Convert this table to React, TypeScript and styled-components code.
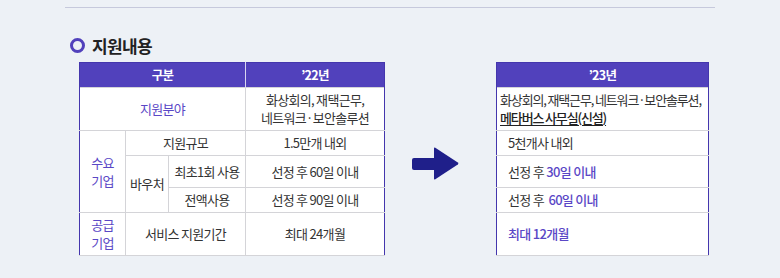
import React from 'react';
import styled, { createGlobalStyle } from 'styled-components';

const GlobalStyle = createGlobalStyle`
  html, body {
    margin: 0;
    padding: 0;
    background: #edf1f6;
  }
  body {
    font-family: "Noto Sans CJK KR", "Noto Sans", sans-serif;
    color: #333;
  }
`;

const Page = styled.div`
  width: 780px;
  height: 278px;
  box-sizing: border-box;
  padding-top: 7px;
`;

const Rule = styled.div`
  margin-left: 65px;
  width: 650px;
  height: 1px;
  background: #c6c9dc;
`;

const Title = styled.h2`
  display: flex;
  align-items: center;
  gap: 7px;
  margin: 26px 0 0 70px;
  height: 22px;
  font-size: 17px;
  font-weight: 700;
  letter-spacing: -0.6px;
  color: #222;
`;

const Ring = styled.span`
  width: 9px;
  height: 9px;
  border: 3px solid #5141bc;
  border-radius: 50%;
  flex: none;
`;

const Row = styled.div`
  display: flex;
  align-items: flex-start;
  margin-top: 6px;
  padding-left: 79px;
`;

const Table = styled.table<{ $width: number }>`
  width: ${p => p.$width}px;
  border-collapse: collapse;
  table-layout: fixed;
  background: #fff;
  border: 1px solid #4436ad;
  font-size: 13px;
  letter-spacing: -0.7px;
  line-height: 18px;
`;

const Head = styled.th`
  height: 24px;
  padding: 0;
  background: #5141bc;
  color: #fff;
  font-weight: 700;
  font-size: 12.5px;
  border-left: 1px solid #d9d6f0;
  &:first-child {
    border-left: none;
  }
`;

const Cell = styled.td<{ $h?: number; $tone?: 'cat' | 'plain'; $left?: number; $tight?: boolean }>`
  height: ${p => (p.$h ? p.$h - 1 : 24)}px;
  padding: 0 0 0 ${p => (p.$left !== undefined ? p.$left : 0)}px;
  text-align: ${p => (p.$left !== undefined ? 'left' : 'center')};
  vertical-align: middle;
  white-space: nowrap;
  letter-spacing: ${p => (p.$tight ? '-1.15px' : 'inherit')};
  color: ${p => (p.$tone === 'cat' ? '#5a47c6' : '#333')};
  border: 1px solid #d4d4d8;
  &:first-child {
    border-left: 1px solid #4436ad;
  }
  &:last-child {
    border-right: 1px solid #4436ad;
  }
`;

const Accent = styled.span`
  color: #5a47c6;
  font-weight: 500;
`;

const New = styled.span`
  color: #222;
  font-weight: 500;
  text-decoration: underline;
  text-underline-offset: 2px;
`;

const ArrowBox = styled.div`
  width: 47px;
  margin: 85px 37px 0 27px;
  flex: none;
`;

const Arrow = () => (
  <svg width="47" height="33" viewBox="0 0 47 33">
    <rect x="0" y="11" width="24" height="12" rx="2" fill="#1f1f8a" />
    <path d="M22 1.5 Q22 0 23.3 0.8 L45.8 15.6 Q47 16.5 45.8 17.4 L23.3 32.2 Q22 33 22 31.5 Z" fill="#1f1f8a" />
  </svg>
);

const App: React.FC = () => {
  return (
    <Page>
      <GlobalStyle />
      <Rule />
      <Title>
        <Ring />
        지원내용
      </Title>
      <Row>
        <Table $width={306}>
          <colgroup>
            <col style={{ width: 46 }} />
            <col style={{ width: 43 }} />
            <col style={{ width: 77 }} />
            <col style={{ width: 139 }} />
          </colgroup>
          <thead>
            <tr>
              <Head colSpan={3}>구분</Head>
              <Head>’22년</Head>
            </tr>
          </thead>
          <tbody>
            <tr>
              <Cell colSpan={3} $h={43} $tone="cat">지원분야</Cell>
              <Cell $h={43}>
                화상회의, 재택근무,
                <br />
                네트워크·보안솔루션
              </Cell>
            </tr>
            <tr>
              <Cell rowSpan={3} $tone="cat">
                수요
                <br />
                기업
              </Cell>
              <Cell colSpan={2} $h={25}>지원규모</Cell>
              <Cell $h={25}>1.5만개 내외</Cell>
            </tr>
            <tr>
              <Cell rowSpan={2}>바우처</Cell>
              <Cell $h={32}>최초1회 사용</Cell>
              <Cell $h={32}>선정 후 60일 이내</Cell>
            </tr>
            <tr>
              <Cell $h={25}>전액사용</Cell>
              <Cell $h={25}>선정 후 90일 이내</Cell>
            </tr>
            <tr>
              <Cell $h={43} $tone="cat">
                공급
                <br />
                기업
              </Cell>
              <Cell colSpan={2} $h={43}>서비스 지원기간</Cell>
              <Cell $h={43}>최대 24개월</Cell>
            </tr>
          </tbody>
        </Table>
        <ArrowBox>
          <Arrow />
        </ArrowBox>
        <Table $width={213}>
          <thead>
            <tr>
              <Head>’23년</Head>
            </tr>
          </thead>
          <tbody>
            <tr>
              <Cell $h={43} $left={3} $tight>
                화상회의, 재택근무, 네트워크·보안솔루션,
                <br />
                <New>메타버스 사무실(신설)</New>
              </Cell>
            </tr>
            <tr>
              <Cell $h={25} $left={11}>5천개사 내외</Cell>
            </tr>
            <tr>
              <Cell $h={32} $left={11}>
                선정 후 <Accent>30일 이내</Accent>
              </Cell>
            </tr>
            <tr>
              <Cell $h={25} $left={11}>
                선정 후 &nbsp;<Accent>60일 이내</Accent>
              </Cell>
            </tr>
            <tr>
              <Cell $h={43} $left={11}>
                <Accent>최대 12개월</Accent>
              </Cell>
            </tr>
          </tbody>
        </Table>
      </Row>
    </Page>
  );
};

export default App;
